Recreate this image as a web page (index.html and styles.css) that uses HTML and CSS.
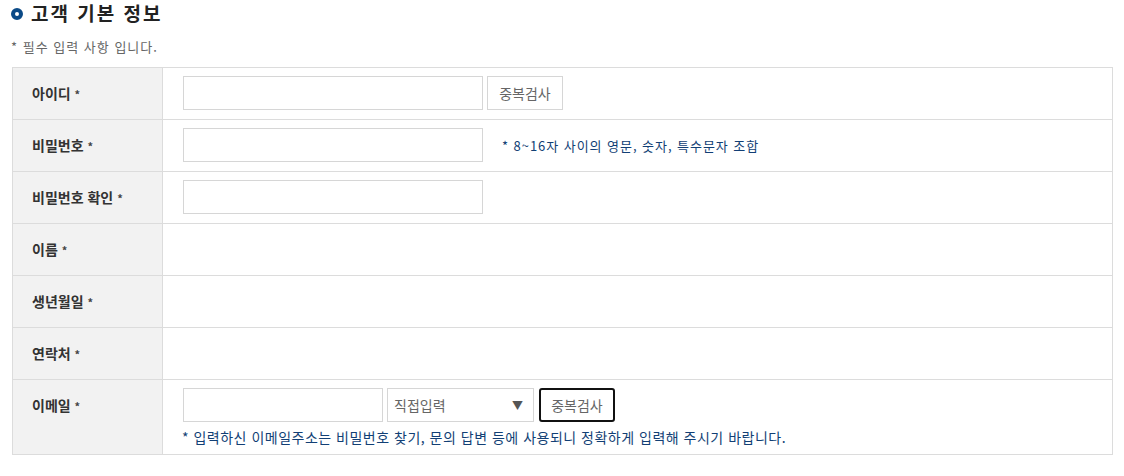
FILE: index.html
```html
<!DOCTYPE html>
<html lang="ko">
<head>
<meta charset="utf-8">
<link rel="stylesheet" href="styles.css">
</head>
<body>
<div class="wrap">
  <h2 class="title"><span class="dot"></span>고객 기본 정보</h2>
  <p class="req">* 필수 입력 사항 입니다.</p>
  <table class="form">
    <tr>
      <th>아이디 <span class="star">*</span></th>
      <td><div class="line"><input class="inp w300" type="text"><button class="btn">중복검사</button></div></td>
    </tr>
    <tr>
      <th>비밀번호 <span class="star">*</span></th>
      <td><div class="line"><input class="inp w300" type="password"><span class="hint">* 8~16자 사이의 영문, 숫자, 특수문자 조합</span></div></td>
    </tr>
    <tr>
      <th>비밀번호 확인 <span class="star">*</span></th>
      <td><div class="line"><input class="inp w300" type="password"></div></td>
    </tr>
    <tr>
      <th>이름 <span class="star">*</span></th>
      <td></td>
    </tr>
    <tr>
      <th>생년월일 <span class="star">*</span></th>
      <td></td>
    </tr>
    <tr>
      <th>연락처 <span class="star">*</span></th>
      <td></td>
    </tr>
    <tr>
      <th>이메일 <span class="star">*</span></th>
      <td>
        <div class="line">
          <input class="inp w200" type="text">
          <div class="sel"><span>직접입력</span><span class="arrow">▼</span></div>
          <button class="btn focus">중복검사</button>
        </div>
        <p class="note">* 입력하신 이메일주소는 비밀번호 찾기, 문의 답변 등에 사용되니 정확하게 입력해 주시기 바랍니다.</p>
      </td>
    </tr>
  </table>
</div>
</body>
</html>
```
FILE: styles.css
```css
html, body {
  margin: 0;
  padding: 0;
  background: #fff;
  font-family: "Noto Sans CJK KR", "Noto Sans", sans-serif;
  color: #333;
}
.wrap {
  padding: 0 11px 0 12px;
}
.title {
  display: flex;
  align-items: center;
  gap: 8px;
  margin: 0 0 0 -1px;
  height: 26px;
  font-size: 19px;
  line-height: 26px;
  font-weight: 700;
  color: #222;
  letter-spacing: 2px;
}
.dot {
  width: 4px;
  height: 4px;
  border: 4px solid #0b4a87;
  border-radius: 50%;
  flex: none;
  position: relative;
  top: 1px;
}
.req {
  margin: 12px 0 0 -1px;
  font-size: 13px;
  line-height: 18px;
  color: #666;
  height: 29px;
  letter-spacing: 1px;
}
.form {
  width: 1101px;
  border-collapse: collapse;
  border: 1px solid #dcdcdc;
}
.form th, .form td {
  border: 1px solid #dcdcdc;
  vertical-align: top;
}
.form tr {
  height: 52px;
}
.form th {
  width: 109px;
  background: #f2f2f2;
  text-align: left;
  padding: 16px 21px 0 19px;
  font-size: 14px;
  line-height: 18px;
  font-weight: 700;
  color: #333;
  box-sizing: content-box;
}
.star {
  font-size: 11px;
  font-weight: 700;
  color: #444;
}
.form td {
  padding: 8px 20px;
}
.line {
  display: flex;
  align-items: center;
  height: 34px;
}
.inp {
  box-sizing: border-box;
  height: 34px;
  border: 1px solid #d6d6d6;
  margin: 0;
  padding: 0 8px;
  background: #fff;
  outline: none;
}
.w300 { width: 300px; }
.w200 { width: 200px; }
.btn {
  box-sizing: border-box;
  height: 34px;
  width: 76px;
  margin-left: 4px;
  border: 1px solid #d6d6d6;
  background: #fff;
  color: #666;
  font-family: "Noto Sans CJK KR", sans-serif;
  font-size: 14px;
  padding: 0;
}
.btn.focus {
  margin-left: 5px;
  border: 2px solid #111;
  border-radius: 3px;
}
.hint {
  margin-left: 19px;
  font-size: 13px;
  letter-spacing: 0.95px;
  color: #123f75;
}
.sel {
  box-sizing: border-box;
  width: 147px;
  height: 34px;
  margin-left: 4px;
  border: 1px solid #d6d6d6;
  display: flex;
  align-items: center;
  justify-content: space-between;
  padding: 0 10px 0 6px;
  font-size: 14px;
  color: #666;
}
.arrow {
  font-size: 11px;
  color: #555;
}
.note {
  margin: 6px 0 0 -1px;
  font-size: 14px;
  line-height: 18px;
  letter-spacing: 0.5px;
  color: #123f75;
}
```
